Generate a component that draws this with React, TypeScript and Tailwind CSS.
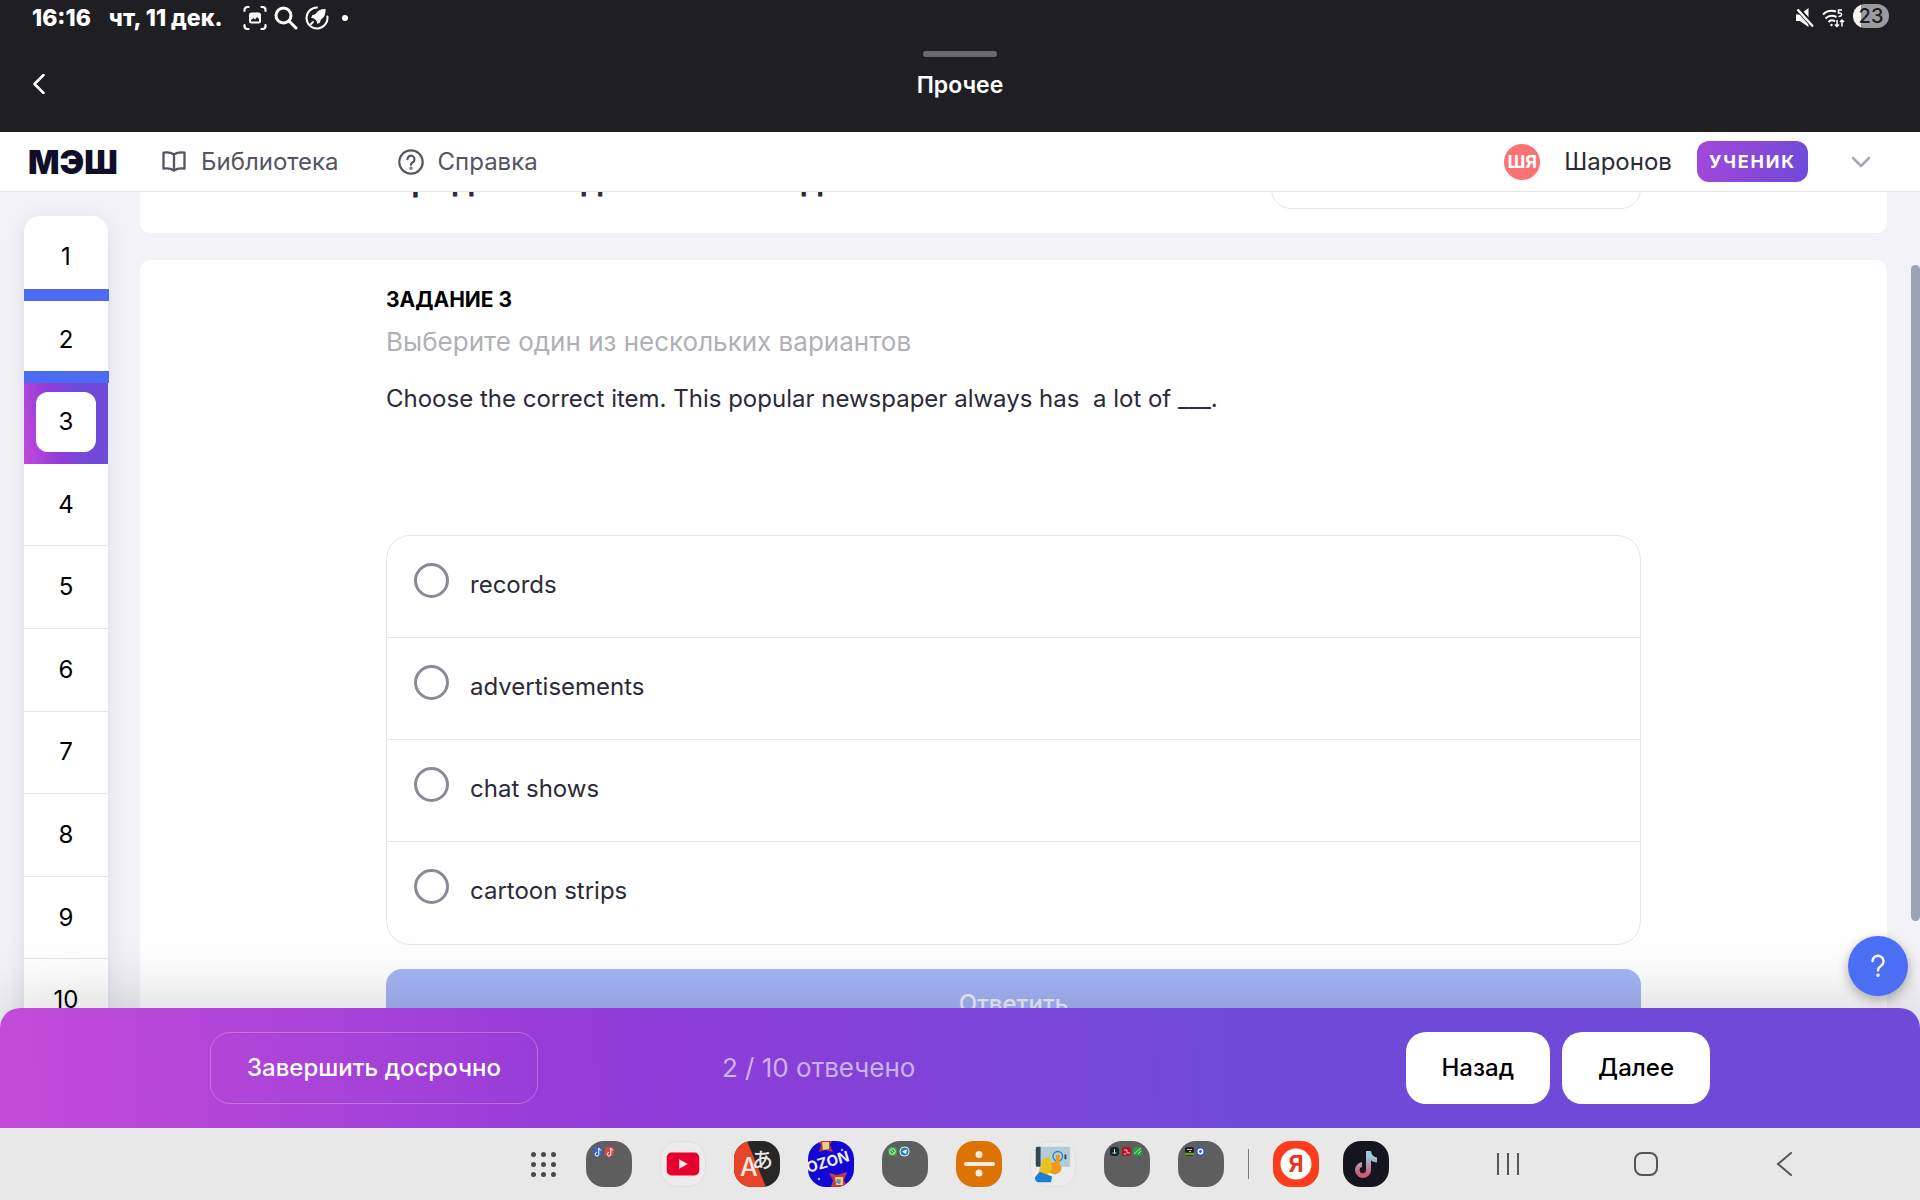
import { useState } from 'react'
import type { ReactNode } from 'react'

const QUESTIONS = [1, 2, 3, 4, 5, 6, 7, 8, 9, 10]
const ANSWERED = [1, 2]
const OPTIONS = ['records', 'advertisements', 'chat shows', 'cartoon strips']

function StatusBar() {
  return (
    <div className="flex h-9 items-center justify-between pl-8 pr-[31px] text-white">
      <div className="flex items-center text-[23px] leading-7 font-extrabold">
        <span>16:16</span>
        <span className="ml-[18px]">чт, 11 дек.</span>
        <svg className="ml-5 size-6" viewBox="0 0 24 24" fill="none" stroke="currentColor" strokeWidth="2.2" strokeLinecap="round">
          <path d="M1.500 5V4a3 3 0 0 1 3-3h1M18.500 1h1a3 3 0 0 1 3 3v1M22.500 19v1a3 3 0 0 1-3 3h-1M5.500 23h-1a3 3 0 0 1-3-3v-1" />
          <path fill="currentColor" stroke="none" fillRule="evenodd" d="M8.500 6.500h7a2.500 2.500 0 0 1 2.500 2.500v6a2.500 2.500 0 0 1-2.500 2.500h-7A2.500 2.500 0 0 1 6 15V9a2.500 2.500 0 0 1 2.500-2.500zM8 15.500h8v-2.500l-2-2-2 2.500-1.500-1.500L8 14z" />
        </svg>
        <svg className="ml-[7px] size-6" viewBox="0 0 24 24" fill="none" stroke="currentColor" strokeWidth="3" strokeLinecap="round">
          <circle cx="9.500" cy="9.500" r="7.500" />
          <path d="M15 15l7 7" />
        </svg>
        <svg className="ml-[7px] size-6" viewBox="0 0 24 24" fill="none" stroke="currentColor" strokeWidth="2" strokeLinecap="round">
          <path d="M12 1.500a10.500 10.500 0 1 0 10.400 9" />
          <path fill="currentColor" stroke="none" d="M20.500 3c-4.500-.2-8 1.600-10.200 5.200L7.500 9 6 11.800l3 .6 2.700 2.700.5 3L15 16.600l.8-2.900C19.400 11.500 20.800 8 20.500 3z" />
          <path d="M8 16l-2 2" />
        </svg>
        <span className="ml-[13px] size-[6px] rounded-full bg-white" />
      </div>
      <div className="flex items-center gap-2 pb-1">
        <svg className="mt-1 h-5 w-[18px]" viewBox="0 0 18 20">
          <path fill="currentColor" d="M0 6.500h4L12.500 0v19L4 13H0z" />
          <path d="M1 0l17 19" stroke="#1f1e23" strokeWidth="5" />
          <path d="M1.500 1.500l15.500 17" stroke="currentColor" strokeWidth="2.400" />
        </svg>
        <svg className="mt-1 h-5 w-[23px]" viewBox="0 0 23 20" fill="none" stroke="currentColor" strokeWidth="2">
          <path d="M1 6.500c4-4 8.500-4.500 13-3M3.500 10.500c3-3 7-3.500 11-1.500M6.500 14c2-2 4.500-2 6.500-.5" />
          <circle cx="9.500" cy="17" r="1.200" fill="currentColor" stroke="none" />
          <path strokeWidth="1.500" d="M20 2h-3.500v3c3.500-.8 4.500 3.500 0 3.500M15 12v6M13 16.500l2 2 2-2M20 18.500v-6M18 14l2-2 2 2" />
        </svg>
        <span className="flex h-6 w-9 items-center justify-center overflow-hidden rounded-full bg-[linear-gradient(90deg,#f4f4f4_22%,#9b9b9d_22%)] text-xl leading-6 font-medium text-[#1f1e23]">
          23
        </span>
      </div>
    </div>
  )
}

function WindowTitle() {
  return (
    <div className="relative flex h-24 flex-col items-center pt-[15px]">
      <span className="h-[6px] w-[74px] rounded-full bg-[#6a696e]" />
      <h1 className="mt-3 text-[23px] leading-8 font-semibold text-white">Прочее</h1>
      <button aria-label="Назад к списку" className="absolute top-8 left-6 flex h-8 w-[30px] items-center justify-center text-white">
        <svg className="h-5 w-3" viewBox="0 0 12 20" fill="none" stroke="currentColor" strokeWidth="2.500" strokeLinecap="round" strokeLinejoin="round">
          <path d="M10.500 1L1.500 10l9 9" />
        </svg>
      </button>
    </div>
  )
}

function AppHeader() {
  return (
    <header className="relative z-20 flex h-[60px] shrink-0 items-center border-b border-[#e4e4ea] bg-white pl-7 pr-[43px] text-[#555463]">
      <a href="#home" className="w-[92px] text-[33px] leading-8 font-black text-[#100e28]">МЭШ</a>
      <a href="#library" className="ml-10 flex items-center gap-[13px] text-2xl leading-8">
        <svg className="h-6 w-7" viewBox="0 0 28 24" fill="none" stroke="currentColor" strokeWidth="2.300" strokeLinejoin="round">
          <path d="M14 4.500C11.500 2.700 7 2.200 3.500 2.700v16c3.500-.5 8 0 10.500 2 2.500-2 7-2.500 10.500-2v-16C21 2.200 16.500 2.700 14 4.500zM14 4.500v16" />
        </svg>
        Библиотека
      </a>
      <a href="#help" className="ml-[59px] flex items-center gap-[14px] text-2xl leading-8">
        <svg className="size-[26px]" viewBox="0 0 26 26" fill="none" stroke="currentColor" strokeWidth="2.200" strokeLinecap="round" strokeLinejoin="round">
          <circle cx="13" cy="13" r="11.700" />
          <path d="M9.500 10.200a3.500 3.500 0 1 1 5.300 3c-1.200.7-1.800 1.300-1.800 2.600" />
          <circle cx="13" cy="19.200" r="0.500" fill="currentColor" />
        </svg>
        Справка
      </a>
      <div className="ml-auto flex items-center">
        <span className="flex size-9 items-center justify-center rounded-full bg-[#f97373] text-lg font-bold text-white">ШЯ</span>
        <span className="ml-6 text-2xl leading-8 text-[#2b2a38]">Шаронов</span>
        <span className="ml-[25px] flex h-[41px] items-center rounded-xl bg-[linear-gradient(100deg,#a347d9,#6f4ad9)] px-3 text-lg leading-6 font-bold tracking-widest text-white">
          УЧЕНИК
        </span>
        <button aria-label="Меню профиля" className="ml-[37px] flex h-8 w-8 items-center justify-center text-[#a9a9b3]">
          <svg className="h-3 w-5" viewBox="0 0 20 12" fill="none" stroke="currentColor" strokeWidth="2.600" strokeLinecap="round" strokeLinejoin="round">
            <path d="M2 2l8 8 8-8" />
          </svg>
        </button>
      </div>
    </header>
  )
}

function QuestionNav({ current, onSelect }: { current: number; onSelect: (n: number) => void }) {
  return (
    <nav className="mt-6 grid h-[826px] w-[84px] shrink-0 auto-rows-fr rounded-t-2xl bg-white text-2xl text-black shadow-[0_4px_20px_rgba(40,40,80,0.10)]">
      {QUESTIONS.map((n) => (
        <button
          key={n}
          onClick={() => onSelect(n)}
          className={`relative flex items-center justify-center ${n === current ? 'bg-[linear-gradient(80deg,#c04ada,#8f3bd8_40%,#6f4ad9_65%)]' : n > 3 ? 'border-b border-[#e6e6ea]' : ''}`}
        >
          {n === current
            ? <span className="flex size-[60px] items-center justify-center rounded-xl bg-white">{n}</span>
            : n}
          {ANSWERED.includes(n) && <span className="absolute -right-px -bottom-[2px] left-0 z-10 h-3 bg-[#4b6cf0]" />}
        </button>
      ))}
    </nav>
  )
}

function Task() {
  const [answer, setAnswer] = useState('')

  return (
    <section className="mt-[27px] rounded-t-[10px] bg-white pt-6">
      <div className="mx-auto max-w-[1255px]">
        <h2 className="text-[21px] leading-8 font-bold text-black">ЗАДАНИЕ 3</h2>
        <p className="mt-2 text-[26px] leading-9 text-[#b0b0b7]">Выберите один из нескольких вариантов</p>
        <p className="mt-[21px] text-2xl leading-9 whitespace-pre-wrap text-[#2b2a38]">
          Choose the correct item. This popular newspaper always has  a lot of ___.
        </p>
        <div className="mt-[118px] divide-y divide-[#e6e6ea] rounded-3xl border border-[#e6e6ea]">
          {OPTIONS.map((option) => (
            <label key={option} className="flex h-[102px] cursor-pointer px-[27px] pt-[27px] text-2xl leading-[44px] text-[#2b2a38]">
              <input
                type="radio"
                name="answer"
                checked={answer === option}
                onChange={() => setAnswer(option)}
                className="mr-[21px] size-[35px] shrink-0 appearance-none rounded-full border-3 border-[#8a8a97] checked:border-10 checked:border-[#4b6cf0]"
              />
              {option}
            </label>
          ))}
        </div>
        <button className="mt-6 h-[70px] w-full rounded-2xl bg-[#a5b5f8] text-2xl font-medium text-white/80">Ответить</button>
      </div>
    </section>
  )
}

function BottomBar({ current, onSelect }: { current: number; onSelect: (n: number) => void }) {
  return (
    <footer className="relative z-10 -mt-5 h-[120px] shrink-0 rounded-t-[20px] bg-[linear-gradient(88deg,#c44bd9,#903bd7_33%,#6f4ad9_64%)] px-6 shadow-[0_-4px_70px_rgba(0,0,0,0.18)]">
      <div className="mx-auto flex h-full max-w-[1500px] items-center">
        <button className="h-[72px] rounded-[20px] border border-white/25 px-9 text-2xl font-medium text-white">Завершить досрочно</button>
        <span className="ml-46 text-[26px] leading-8 text-white/60">2 / 10 отвечено</span>
        <button onClick={() => onSelect(Math.max(1, current - 1))} className="ml-auto h-[72px] rounded-[20px] bg-white px-9 text-2xl font-medium text-black">Назад</button>
        <button onClick={() => onSelect(Math.min(10, current + 1))} className="ml-3 h-[72px] rounded-[20px] bg-white px-9 text-2xl font-medium text-black">Далее</button>
      </div>
    </footer>
  )
}

function AppIcon({ label, className, children }: { label: string; className: string; children?: ReactNode }) {
  return (
    <button aria-label={label} className={`size-[46px] shrink-0 overflow-hidden rounded-[18px] ${className}`}>
      <svg className="size-full" viewBox="0 0 46 46">{children}</svg>
    </button>
  )
}

const NOTE = 'M0 4.500a1.800 1.800 0 1 0 1.800 1.800V0c.4 1.500 1.200 2 2.400 2.200'

function Dock() {
  return (
    <div className="relative z-10 flex h-[72px] shrink-0 items-center bg-[#e8e8e8]">
      <div className="flex-1 pr-[62px]" />
      <div className="flex items-center gap-7">
        <button aria-label="Приложения" className="mr-[2px] grid grid-cols-3 gap-[5px]">
          {QUESTIONS.slice(0, 9).map((n) => <span key={n} className="size-[5px] rounded-full bg-[#4a4a4a]" />)}
        </button>
        <AppIcon label="Папка: музыка" className="bg-[#5e5e5e]">
          <rect x="7" y="6" width="9" height="9" rx="3" fill="#3f62c9" />
          <path transform="translate(11 7)" d={NOTE} stroke="#fff" fill="none" />
          <rect x="19" y="6" width="9" height="9" rx="3" fill="#e0404f" />
          <path transform="translate(23 7)" d={NOTE} stroke="#fff" fill="none" />
        </AppIcon>
        <AppIcon label="YouTube" className="border border-[#dedede] bg-[#ebebeb]">
          <rect x="6" y="11" width="34" height="24" rx="5" fill="#e6002d" />
          <path d="M19 18v10l9-5z" fill="#f5e9ea" />
        </AppIcon>
        <AppIcon label="Переводчик" className="bg-[#262626]">
          <path d="M0 0h13l19 46H0z" fill="#e8442a" />
          <text x="6" y="35" fontSize="25" fontWeight="500" fill="#f3e6e3">A</text>
          <text x="18" y="26" fontSize="21" fontWeight="500" fontFamily="Noto Sans CJK JP, sans-serif" fill="#e8e8e8">あ</text>
        </AppIcon>
        <AppIcon label="OZON" className="bg-[#1207d6]">
          <path d="M9 0l4 4-2 7 6-2 8 2-3-7 2-4z" fill="#b5344a" />
          <path d="M14 1h7v7l-6 1z" fill="#e4d67c" />
          <path d="M21 32l8 2 10-3-3 8 3 7H23l2-7z" fill="#c7374a" />
          <path d="M27 36h8v8h-7z" fill="#ead25d" />
          <path d="M29 38l4 1-1 4-4-1z" fill="#5a8bd6" />
          <circle cx="34" cy="9" r="1.300" fill="#9cb1ff" />
          <circle cx="11" cy="38" r="1.300" fill="#9cb1ff" />
          <text x="0" y="32" fontSize="15" fontWeight="700" fill="#eee" transform="rotate(-16 0 32)">OZON</text>
        </AppIcon>
        <AppIcon label="Папка: мессенджеры" className="bg-[#5e5e5e]">
          <rect x="6" y="6" width="9" height="9" rx="3" fill="#27a844" />
          <circle cx="10.500" cy="10.500" r="2.800" fill="none" stroke="#dff3e2" />
          <path d="M9.500 9.500l2 2" stroke="#fff" />
          <rect x="18" y="6" width="9" height="9" rx="4" fill="#1f86b8" stroke="#e3f3fb" />
          <path d="M20 10.500l5-2-1 4.500z" fill="#fff" />
        </AppIcon>
        <AppIcon label="Калькулятор" className="bg-[#dd7300]">
          <circle cx="23" cy="13.500" r="3.500" fill="#f5ece2" />
          <rect x="8" y="21" width="31" height="4" rx="2" fill="#f5ece2" />
          <circle cx="23" cy="32" r="3.500" fill="#f5ece2" />
        </AppIcon>
        <AppIcon label="Автокликер" className="border border-[#e0e0e0] bg-[#ebebeb]">
          <rect x="5" y="5" width="36" height="21" rx="2" fill="#b3cdd8" />
          <path d="M7 5h3v21H7a2 2 0 0 1-2-2V7a2 2 0 0 1 2-2z" fill="#37474f" />
          <path d="M36 13v5" stroke="#37474f" strokeWidth="2" />
          <circle cx="28" cy="15" r="5" fill="none" stroke="#1f88bd" strokeWidth="1.500" />
          <path d="M26 14c2-2 4-.5 4 1v8l2 4c0 4-3 6-7 7l-9-3 2-9 8-1z" fill="#f09a1c" />
          <path d="M13 17l7-1 2 12-6 8-8-5z" fill="#ecc11d" />
          <path d="M9 31l13 5-1 6H5l-1-5z" fill="#1c7fd0" />
        </AppIcon>
        <AppIcon label="Папка: игры" className="bg-[#5e5e5e]">
          <rect x="6" y="6" width="9" height="9" rx="3" fill="#10262b" />
          <path d="M10.500 8v5M8.500 12h4" stroke="#b9d6d8" />
          <rect x="18" y="6" width="9" height="9" rx="3" fill="#b80f24" />
          <path d="M20 9h3v3h3M20 13h2" stroke="#f3c9cf" fill="none" />
          <rect x="29" y="6" width="9" height="9" rx="3" fill="#2f9a48" />
          <path d="M30 13l7-6M34 13l3-3" stroke="#a9e5b5" />
        </AppIcon>
        <AppIcon label="Папка: инструменты" className="bg-[#5e5e5e]">
          <rect x="7" y="6" width="9" height="9" rx="2" fill="#1e1e1e" />
          <path d="M7 13h9" stroke="#6f9b24" strokeWidth="2.500" />
          <path d="M9 8.500h5M11 10.500h2" stroke="#bbb" />
          <rect x="18" y="6" width="9" height="9" rx="3" fill="#3c57d8" />
          <circle cx="22.500" cy="10.500" r="2.200" fill="none" stroke="#fff" strokeWidth="1.500" />
        </AppIcon>
        <div className="-mx-1 flex items-center gap-6">
          <span className="h-[30px] w-px bg-[#777]" />
          <AppIcon label="Яндекс" className="bg-[#fb3d1d]">
            <circle cx="23" cy="23" r="15.500" fill="#fff" />
            <text x="23" y="31" fontSize="23" fontWeight="700" textAnchor="middle" fill="#e03a22">Я</text>
          </AppIcon>
          <AppIcon label="TikTok" className="bg-[#14151f]">
            <defs>
              <linearGradient id="tok" x1="0" y1="0" x2="0" y2="1">
                <stop offset="0.200" stopColor="#9ccbd6" />
                <stop offset="0.850" stopColor="#cf5c7c" />
              </linearGradient>
            </defs>
            <path d="M23 10h5c.5 4 2.500 6 6 6.500v5c-2.200 0-4.300-.7-6-2V29a8 8 0 1 1-9-8v5a3.200 3.200 0 1 0 4 3z" fill="url(#tok)" />
          </AppIcon>
        </div>
      </div>
      <div className="flex flex-1 justify-end pr-[67px] text-[#555]">
        <button aria-label="Недавние" className="flex w-[138px] justify-center">
          <svg className="size-6" viewBox="0 0 24 24" stroke="currentColor" strokeWidth="2"><path d="M2 1v22M12 1v22M22 1v22" /></svg>
        </button>
        <button aria-label="Главный экран" className="flex w-[138px] justify-center">
          <svg className="size-6" viewBox="0 0 24 24" stroke="currentColor" strokeWidth="2" fill="none"><rect x="1" y="1" width="22" height="22" rx="7" /></svg>
        </button>
        <button aria-label="Назад" className="flex w-[138px] justify-center">
          <svg className="size-6" viewBox="0 0 24 24" stroke="currentColor" strokeWidth="2" fill="none" strokeLinecap="round"><path d="M19 1L6 12l13 11" /></svg>
        </button>
      </div>
    </div>
  )
}

export default function App() {
  const [current, setCurrent] = useState(3)

  return (
    <div className="flex h-screen flex-col overflow-hidden bg-white font-[Inter,sans-serif]">
      <div className="shrink-0 bg-[#1f1e23]">
        <StatusBar />
        <WindowTitle />
      </div>
      <AppHeader />

      <main className="relative flex min-h-0 flex-1 overflow-hidden bg-[#f2f2f7] pl-6 pr-[33px]">
        <QuestionNav current={current} onSelect={setCurrent} />
        <div className="ml-8 flex min-w-0 flex-1 flex-col">
          <section className="-mt-10 h-[81px] shrink-0 rounded-b-[10px] bg-white">
            <div className="mx-auto flex max-w-[1255px] justify-between">
              <h2 className="text-[34px] leading-[54px] font-semibold text-[#2b2a38]">Среднее задание на вход</h2>
              <div className="h-[57px] w-[370px] rounded-b-[20px] border border-[#e6e6ea]" />
            </div>
          </section>
          <Task />
        </div>
        <span className="absolute top-[73px] right-0 h-[656px] w-[9px] rounded-full bg-[#9da3b5]" />
      </main>

      <BottomBar current={current} onSelect={setCurrent} />
      <button aria-label="Помощь" className="fixed right-3 bottom-[204px] z-20 flex size-[60px] items-center justify-center rounded-full bg-[#4b6ff4] text-white shadow-[0_4px_12px_rgba(0,0,0,0.3)]">
        <svg className="h-6 w-4" viewBox="0 0 16 24" fill="none" stroke="currentColor" strokeWidth="2.300" strokeLinecap="round" strokeLinejoin="round">
          <path d="M2.500 7.200a5.500 5.500 0 1 1 8.500 4.700c-2 1.300-3 2-3 4.600" />
          <circle cx="8" cy="21.200" r="0.600" fill="currentColor" />
        </svg>
      </button>
      <Dock />
    </div>
  )
}
